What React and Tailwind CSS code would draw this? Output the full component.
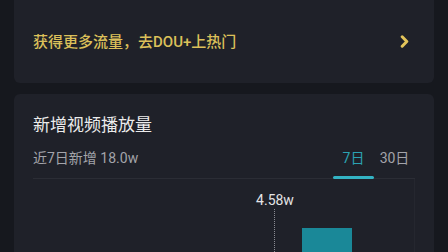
import React from "react";

export default function App() {
  return (
    <div
      className="w-[448px] h-[252px] overflow-hidden bg-[#16181e] px-[14px] flex flex-col gap-[11px]"
      style={{ fontFamily: "Roboto, 'Noto Sans CJK SC', sans-serif" }}
    >
      <div className="h-[83px] shrink-0 bg-[#1f2129] rounded-b-md pl-[19px] pr-[25px] flex items-center justify-between">
        <span className="text-[15px] leading-[20px] text-[#dcc05a] font-medium">
          获得更多流量，去DOU+上热门
        </span>
        <svg width="9" height="13" viewBox="0 0 9 13" fill="none">
          <path d="M2.2 1.8 L6.8 6.5 L2.2 11.2" stroke="#e2c45a" strokeWidth="3" strokeLinecap="round" strokeLinejoin="round" />
        </svg>
      </div>
      <div className="flex-1 bg-[#1f2129] rounded-t-md px-[19px] pt-[19px] flex flex-col">
        <div className="text-[17px] leading-[24px] text-[#ececec]">新增视频播放量</div>
        <div className="mt-[11px] flex items-end justify-between border-b border-[#2b2d35]">
          <span className="mb-[10px] text-[14px] leading-[20px] text-[#a3a4aa]">近7日新增 18.0w</span>
          <div className="flex">
            <div className="w-[41px] flex flex-col items-center">
              <span className="text-[14px] leading-[20px] text-[#2ba2b3]">7日</span>
              <div className="mt-[8px] -mb-[1px] h-[3px] w-[41px] rounded-full bg-[#33b3c3]" />
            </div>
            <div className="w-[41px] flex flex-col items-center">
              <span className="text-[14px] leading-[20px] text-[#a3a4aa]">30日</span>
              <div className="mt-[8px] -mb-[1px] h-[3px]" />
            </div>
          </div>
        </div>
        <div className="relative flex-1 border-r border-[#25272f]">
          <span className="absolute left-[223px] top-[13px] w-[38px] text-center text-[14px] leading-[16px] text-[#e4e4e6]">
            4.58w
          </span>
          <div className="absolute left-[241px] top-[30px] bottom-0 border-l border-dotted border-[#8a8c93]" />
          <div className="absolute left-[269px] top-[49px] w-[50px] bottom-0 bg-[#1a8898]" />
        </div>
      </div>
    </div>
  );
}
